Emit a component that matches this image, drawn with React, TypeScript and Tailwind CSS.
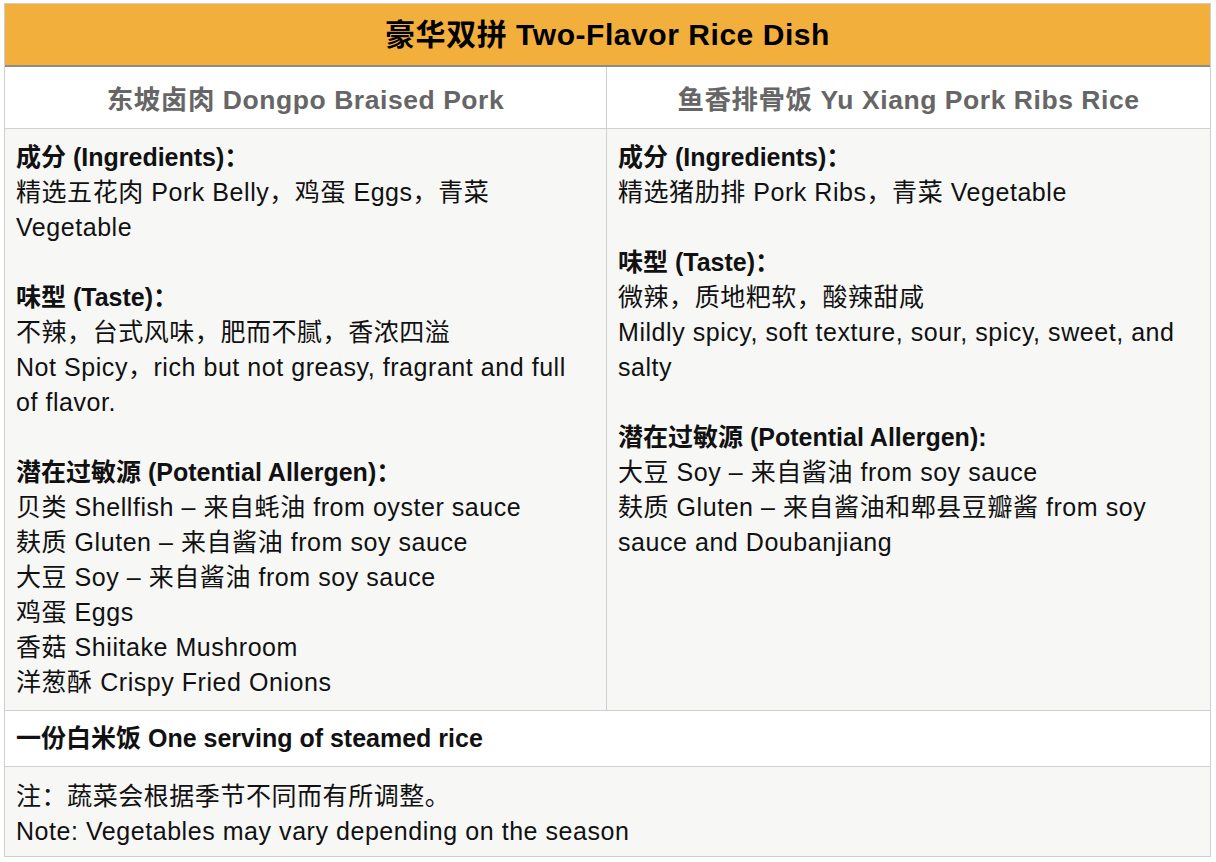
const FONT = '"Liberation Sans", "Noto Sans CJK SC", Arial, sans-serif';

type Section = { title: string; lines: string[] };

const left: Section[] = [
  { title: '成分 (Ingredients)：', lines: ['精选五花肉 Pork Belly，鸡蛋 Eggs，青菜 Vegetable'] },
  {
    title: '味型 (Taste)：',
    lines: ['不辣，台式风味，肥而不腻，香浓四溢', 'Not Spicy，rich but not greasy, fragrant and full of flavor.'],
  },
  {
    title: '潜在过敏源 (Potential Allergen)：',
    lines: [
      '贝类 Shellfish – 来自蚝油 from oyster sauce',
      '麸质 Gluten – 来自酱油 from soy sauce',
      '大豆 Soy – 来自酱油 from soy sauce',
      '鸡蛋 Eggs',
      '香菇 Shiitake Mushroom',
      '洋葱酥 Crispy Fried Onions',
    ],
  },
];

const right: Section[] = [
  { title: '成分 (Ingredients)：', lines: ['精选猪肋排 Pork Ribs，青菜 Vegetable'] },
  {
    title: '味型 (Taste)：',
    lines: ['微辣，质地粑软，酸辣甜咸', 'Mildly spicy, soft texture, sour, spicy, sweet, and salty'],
  },
  {
    title: '潜在过敏源 (Potential Allergen):',
    lines: ['大豆 Soy – 来自酱油 from soy sauce', '麸质 Gluten – 来自酱油和郫县豆瓣酱 from soy sauce and Doubanjiang'],
  },
];

function Cell({ sections, last }: { sections: Section[]; last?: boolean }) {
  return (
    <div className={`pt-[11px] pb-[10px] pl-[11px] pr-4 ${last ? '' : 'border-r border-[#d0d0d0]'}`}>
      {sections.map((s, i) => (
        <div key={i} className={i > 0 ? 'mt-[35px]' : ''}>
          <p className="font-bold tracking-normal">{s.title}</p>
          {s.lines.map((l, j) => (
            <p key={j}>{l}</p>
          ))}
        </div>
      ))}
    </div>
  );
}

export default function App() {
  return (
    <div className="bg-white w-[1216px] h-[862px] pt-[3px] pl-[4px]" style={{ fontFamily: FONT }}>
      <div className="w-[1207px] border border-[#cfcfcf] text-[25px] leading-[35px] tracking-[0.55px] text-[#111]">
        {/* title bar */}
        <div className="bg-[#f2af3c] h-[63px] flex items-center justify-center border-b-2 border-[#8c8c8c]">
          <h1 className="text-[30px] font-bold text-black">豪华双拼 Two-Flavor Rice Dish</h1>
        </div>

        <div className="grid grid-cols-[602px_1fr] border-b border-[#d0d0d0]">
          <div className="h-[61px] pt-[5px] flex items-center justify-center border-r border-[#d0d0d0] text-[26.5px] font-bold text-[#666]">
            东坡卤肉 Dongpo Braised Pork
          </div>
          <div className="h-[61px] pt-[5px] flex items-center justify-center text-[26.5px] font-bold text-[#666]">
            鱼香排骨饭 Yu Xiang Pork Ribs Rice
          </div>
        </div>

        <div className="grid grid-cols-[602px_1fr] bg-[#f7f7f6] border-b border-[#d0d0d0]">
          <Cell sections={left} />
          <Cell sections={right} last />
        </div>

        <div className="pl-[11px] py-[10px] font-bold tracking-normal border-b border-[#d0d0d0]">
          一份白米饭 One serving of steamed rice
        </div>

        <div className="bg-[#f7f7f6] pl-[11px] pt-[12px] pb-[7px]">
          <p>注：蔬菜会根据季节不同而有所调整。</p>
          <p>Note: Vegetables may vary depending on the season</p>
        </div>
      </div>
    </div>
  );
}
